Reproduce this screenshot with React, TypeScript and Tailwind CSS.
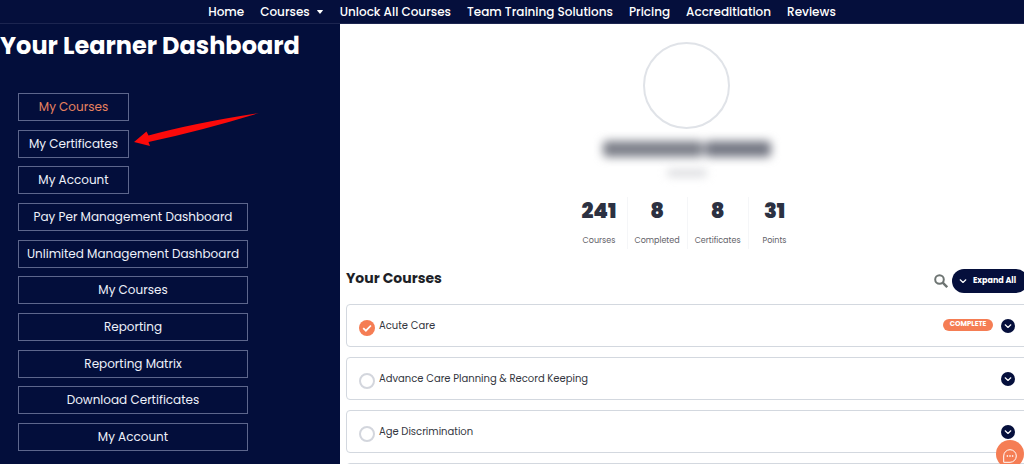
import { useState } from "react";

const NAV_LINKS = ["Unlock All Courses", "Team Training Solutions", "Pricing", "Accreditiation", "Reviews"];

const SIDEBAR = [
  { label: "My Courses", compact: true, active: true },
  { label: "My Certificates", compact: true },
  { label: "My Account", compact: true },
  { label: "Pay Per Management Dashboard" },
  { label: "Unlimited Management Dashboard" },
  { label: "My Courses" },
  { label: "Reporting" },
  { label: "Reporting Matrix" },
  { label: "Download Certificates" },
  { label: "My Account" },
];

const STATS = [
  { value: 241, label: "Courses" },
  { value: 8, label: "Completed" },
  { value: 8, label: "Certificates" },
  { value: 31, label: "Points" },
];

const COURSES = [
  { title: "Acute Care", complete: true },
  { title: "Advance Care Planning & Record Keeping", complete: false },
  { title: "Age Discrimination", complete: false },
  { title: "", complete: false },
];

function Chevron({ className }: { className: string }) {
  return (
    <svg viewBox="0 0 10 10" className={className} fill="none" stroke="currentColor" strokeWidth="1.5" strokeLinecap="round" strokeLinejoin="round" aria-hidden="true">
      <path d="M1.5 3.5 5 6.8 8.5 3.5" />
    </svg>
  );
}

function TopNav() {
  return (
    <nav className="flex h-6 shrink-0 items-center justify-center gap-4 whitespace-nowrap border-b border-[#1c2550] bg-[#050f3c] pl-5 text-xs font-medium text-white">
      <a href="#home">Home</a>
      <a href="#courses" className="flex items-center gap-1.5">
        Courses
        <svg viewBox="0 0 8 5" className="h-1 w-2" fill="currentColor" aria-hidden="true">
          <path d="M.6 0h6.8q.6 0 .2.5L4.5 4.3q-.5.5-1 0L.4.5Q0 0 .6 0Z" />
        </svg>
      </a>
      {NAV_LINKS.map((item) => (
        <a key={item} href="#nav">{item}</a>
      ))}
    </nav>
  );
}

function Sidebar() {
  return (
    <aside className="relative w-[33.2%] shrink-0 bg-[#030e3b]">
      <h1 className="whitespace-nowrap pt-1.5 text-2xl leading-8 font-bold text-white">Your Learner Dashboard</h1>
      <ul className="mt-[31px] ml-[18px] flex h-[358px] w-[230px] flex-col justify-between">
        {SIDEBAR.map(({ label, compact, active }, i) => (
          <li key={i} className="flex">
            <a
              href="#section"
              className={`flex h-7 items-center justify-center border border-[#5d668c] text-xs whitespace-nowrap ${compact ? "w-[111px]" : "w-full"} ${active ? "text-[#e8825f]" : "text-[#eef1fa]"}`}
            >
              {label}
            </a>
          </li>
        ))}
      </ul>
      <svg viewBox="0 0 126 36" className="absolute top-[87px] left-[134px] h-9 w-[126px]" aria-hidden="true">
        <path d="M0 31 12.500 20.500 14.500 24.500 Q60 12 125 2 Q70 19 14.500 31L16 35Z" fill="#fb0a0a" />
      </svg>
    </aside>
  );
}

function CourseCard({ title, complete }: { title: string; complete: boolean }) {
  return (
    <li className="flex h-[43px] shrink-0 items-center rounded border border-[#d3d8df] pr-3 pl-3 text-[10px] text-[#33363e]">
      {complete ? (
        <svg viewBox="0 0 16 16" className="mt-1 size-4 shrink-0" aria-label="Complete">
          <circle cx="8" cy="8" r="8" fill="#f57d54" />
          <path d="m4.200 8.100 2.700 2.600 5-5.200" fill="none" stroke="#fff" strokeWidth="1.800" />
        </svg>
      ) : (
        <span className="mt-1 size-4 shrink-0 rounded-full border-2 border-[#d3d6dd]" />
      )}
      <a href="#course" className="ml-1 flex-1 whitespace-nowrap">{title}</a>
      {complete && (
        <span className="mr-2 mb-0.5 flex h-3 w-[50px] items-center justify-center rounded-full bg-[#f57d54] text-[7px] font-bold text-white">COMPLETE</span>
      )}
      <button type="button" aria-label="Expand course" className="flex size-3.5 items-center justify-center rounded-full bg-[#050f3c] text-white">
        <Chevron className="size-2" />
      </button>
    </li>
  );
}

function Profile() {
  return (
    <section className="flex flex-col items-center pt-[18px] pl-1">
      <div className="size-[87px] rounded-full border-2 border-[#e0e3e8]" />
      <div className="mt-3 flex h-4 w-[168px] gap-0.5 blur-[5px]">
        <div className="flex-1 rounded bg-[#7c7f89]" />
        <div className="w-[66px] rounded bg-[#747783]" />
      </div>
      <div className="mt-3 h-2 w-10 rounded bg-[#dddee1] blur-xs" />
      <dl className="mt-5 flex h-[52px] divide-x divide-[#f5f6f8] pr-1.5 text-center">
        {STATS.map(({ value, label }) => (
          <div key={label} className="flex flex-col-reverse justify-end gap-3 px-[7px] first:pr-2.5 last:pl-3.5">
            <dt className="text-[8px] leading-3 text-[#5f6168]">{label}</dt>
            <dd className="pt-0.5 text-[21px] leading-6 font-black text-[#2c3142]">{value}</dd>
          </div>
        ))}
      </dl>
    </section>
  );
}

export default function App() {
  const [expanded, setExpanded] = useState(false);
  return (
    <div className="flex h-screen flex-col overflow-hidden bg-white font-[Poppins,Inter,sans-serif]">
      <TopNav />
      <div className="flex min-h-0 flex-1">
        <Sidebar />
        <main className="min-w-0 flex-1 overflow-hidden pl-1.5">
          <Profile />
          <div className="-mr-1 mt-[19px] flex items-center">
            <h2 className="flex-1 pb-1.5 text-sm leading-5 font-bold text-[#1d1f27]">Your Courses</h2>
            <button type="button" aria-label="Search courses" className="mr-1 text-[#6d7472]">
              <svg viewBox="0 0 14 14" className="size-3.5" fill="none" stroke="currentColor" strokeWidth="2" aria-hidden="true">
                <circle cx="5.500" cy="5.500" r="4.300" />
                <path d="m8.700 8.700 4.500 4.500" strokeWidth="2.400" />
              </svg>
            </button>
            <button
              type="button"
              aria-pressed={expanded}
              onClick={() => setExpanded(!expanded)}
              className="flex h-6 w-[76px] items-center gap-1.5 rounded-full bg-[#050f3c] pl-[7px] text-[8px] font-bold whitespace-nowrap text-white"
            >
              <Chevron className="size-2" />
              Expand All
            </button>
          </div>
          <ul className="-mr-1 mt-2.5 flex flex-col gap-2.5">
            {COURSES.map((course, i) => (
              <CourseCard key={i} {...course} />
            ))}
          </ul>
        </main>
      </div>
      <button type="button" aria-label="Open chat" className="fixed right-0 -bottom-1 flex size-7 items-center justify-center rounded-full bg-[#f57d54] text-white">
        <svg viewBox="0 0 14 14" className="mt-1 size-3.5" fill="none" stroke="currentColor" aria-hidden="true">
          <path d="M.7 13.300V7A6.300 6.300 0 1 1 7 13.300Z" />
          <path d="M3.700 7h1.400M6.300 7h1.400M8.900 7h1.400" strokeWidth="1.400" />
        </svg>
      </button>
    </div>
  );
}
